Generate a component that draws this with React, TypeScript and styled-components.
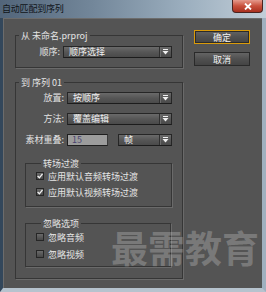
import React, {FC} from "react";
import styled, {createGlobalStyle} from "styled-components";

const GlobalStyle = createGlobalStyle`
  html, body {
    margin: 0;
    padding: 0;
    background: #545454;
  }
  body {
    font-family: "Noto Sans CJK SC", "Noto Sans", sans-serif;
    font-size: 9px;
  }
`

const Window = styled.div`
  width: 266px;
  height: 292px;
  display: flex;
  flex-direction: column;
  overflow: hidden;
`
const TitleBar = styled.div`
  height: 18px;
  flex: none;
  display: flex;
  justify-content: space-between;
  align-items: flex-start;
  background: linear-gradient(90deg, #52657a 0%, #73879a 35%, #9cafbf 70%, #c2ced8 100%);
`
const Title = styled.span`
  padding-left: 2px;
  line-height: 17px;
  color: #101418;
  letter-spacing: -0.2px;
`
const CloseButton = styled.div`
  width: 31px;
  height: 13px;
  margin-right: 3px;
  display: flex;
  align-items: center;
  justify-content: center;
  box-sizing: border-box;
  border: 1px solid #4a2320;
  border-top: none;
  border-radius: 0 0 4px 4px;
  background: linear-gradient(#e59a8c, #c8503c 50%, #a8301f);
`
const Frame = styled.div`
  flex: 1;
  display: flex;
  border-left: 3px solid #33475b;
  border-right: 4px solid #9fb0bf;
  border-bottom: 4px solid #b6c3ce;
`
const Body = styled.div`
  position: relative;
  flex: 1;
  display: flex;
  align-items: flex-start;
  gap: 11px;
  padding: 12px 0 0 12px;
  background: #545454;
  box-shadow: inset 1px 1px 0 #6c6c6c;
`
const Main = styled.div`
  width: 168px;
  display: flex;
  flex-direction: column;
  gap: 9px;
`
const Side = styled.div`
  width: 56px;
  display: flex;
  flex-direction: column;
  gap: 8px;
`
const Group = styled.fieldset<{$pad: string; $margin?: string; $rowGap?: number}>`
  margin: ${p => p.$margin ?? "0"};
  min-width: 0;
  padding: ${p => p.$pad};
  border: 1px solid #363636;
  box-shadow: 1px 1px 0 #6a6a6a;
  display: flex;
  flex-direction: column;
  row-gap: ${p => p.$rowGap ?? 0}px;
`
const Legend = styled.legend<{$indent: number}>`
  margin-left: ${p => p.$indent}px;
  padding: 0 2px;
  line-height: 11px;
  color: #e4e4e4;
`
const Row = styled.div<{$label: number; $gap?: number}>`
  display: grid;
  grid-template-columns: ${p => p.$label}px 1fr;
  column-gap: 3px;
  align-items: center;
  margin-top: ${p => p.$gap ?? 0}px;
`
const Label = styled.span`
  text-align: right;
  color: #e2e2e2;
  line-height: 12px;
  white-space: nowrap;
`
const Select = styled.div<{$width?: number}>`
  height: 12px;
  ${p => p.$width ? `width: ${p.$width}px;` : "flex: 1;"}
  box-sizing: border-box;
  display: flex;
  align-items: center;
  border: 1px solid #262626;
  border-bottom-color: #1c1c1c;
  background: linear-gradient(#6a6a6a, #565656 50%, #4a4a4a);
  color: #f2f2f2;
`
const SelectText = styled.span`
  flex: 1;
  padding-left: 5px;
  line-height: 10px;
  white-space: nowrap;
`
const Arrow = styled.span`
  width: 11px;
  height: 100%;
  display: flex;
  align-items: center;
  justify-content: center;
  border-left: 1px solid #2f2f2f;
  box-shadow: inset 1px 0 0 #6c6c6c;
`
const Pair = styled.div`
  display: flex;
  gap: 10px;
  align-items: center;
`
const NumberField = styled.div`
  width: 41px;
  height: 12px;
  box-sizing: border-box;
  border: 1px solid #1e1e1e;
  border-right-color: #3a3a3a;
  background: #9c9c9c;
  color: #4a4470;
  padding-left: 4px;
  line-height: 10px;
`
const CheckRow = styled.label`
  display: flex;
  align-items: center;
  gap: 4px;
  height: 12px;
  color: #e6e6e6;
  white-space: nowrap;
`
const Box = styled.span`
  width: 8px;
  height: 8px;
  box-sizing: border-box;
  display: flex;
  align-items: center;
  justify-content: center;
  border: 1px solid #262626;
  background: linear-gradient(#6a6a6a, #474747);
`
const ActionButton = styled.div<{$primary?: boolean}>`
  height: 14px;
  box-sizing: border-box;
  display: flex;
  align-items: center;
  justify-content: center;
  color: #f4f4f4;
  border: 1px solid ${p => p.$primary ? "#d99a0a" : "#2a2a2a"};
  box-shadow: ${p => p.$primary ? "inset 0 0 0 1px #2a2a2a" : "none"};
  background: linear-gradient(#646464, #505050 50%, #444444);
`
const Watermark = styled.span`
  position: absolute;
  left: 108px;
  top: 211px;
  font-family: "Noto Sans CJK SC", sans-serif;
  font-weight: 700;
  font-size: 37px;
  line-height: 37px;
  color: rgba(255, 255, 255, 0.22);
  pointer-events: none;
`

const DropArrow: FC = () => (
  <svg width="7" height="6" viewBox="0 0 7 6">
    <rect x="1" y="0" width="5" height="1" fill="#f0f0f0" />
    <path d="M0.5 2 H6.5 L3.5 5.5 Z" fill="#f0f0f0" />
  </svg>
)

const Dropdown: FC<{text: string; width?: number}> = ({text, width}) => (
  <Select $width={width}>
    <SelectText>{text}</SelectText>
    <Arrow><DropArrow /></Arrow>
  </Select>
)

const Check: FC<{checked?: boolean; text: string}> = ({checked, text}) => (
  <CheckRow>
    <Box>
      {checked && (
        <svg width="6" height="6" viewBox="0 0 6 6">
          <path d="M0.6 3 L2.4 4.8 L5.5 0.8" stroke="#f2f2f2" strokeWidth="1.3" fill="none" />
        </svg>
      )}
    </Box>
    {text}
  </CheckRow>
)

const App: FC = () => {
  return (
    <Window>
      <GlobalStyle />
      <TitleBar>
        <Title>自动匹配到序列</Title>
        <CloseButton>
          <svg width="8" height="7" viewBox="0 0 8 7">
            <path d="M1 0.5 L7 6.5 M7 0.5 L1 6.5" stroke="#ffffff" strokeWidth="1.8" />
          </svg>
        </CloseButton>
      </TitleBar>
      <Frame>
        <Body>
          <Main>
            <Group $pad="5px 10px 9px 0">
              <Legend $indent={3}>从 未命名.prproj</Legend>
              <Row $label={44}>
                <Label>顺序:</Label>
                <Dropdown text="顺序选择" />
              </Row>
            </Group>
            <Group $pad="4px 10px 11px 0">
              <Legend $indent={3}>到 序列 01</Legend>
              <Row $label={48}>
                <Label>放置:</Label>
                <Dropdown text="按顺序" />
              </Row>
              <Row $label={48} $gap={9}>
                <Label>方法:</Label>
                <Dropdown text="覆盖编辑" />
              </Row>
              <Row $label={48} $gap={9}>
                <Label>素材重叠:</Label>
                <Pair>
                  <NumberField>15</NumberField>
                  <Dropdown text="帧" />
                </Pair>
              </Row>
              <Group $pad="1px 0 8px 10px" $margin="12px 0 0 9px" $rowGap={4}>
                <Legend $indent={5}>转场过渡</Legend>
                <Check checked text="应用默认音频转场过渡" />
                <Check checked text="应用默认视频转场过渡" />
              </Group>
              <Group $pad="2px 0 6px 10px" $margin="11px 1px 0 9px" $rowGap={5}>
                <Legend $indent={5}>忽略选项</Legend>
                <Check text="忽略音频" />
                <Check text="忽略视频" />
              </Group>
            </Group>
          </Main>
          <Side>
            <ActionButton $primary>确定</ActionButton>
            <ActionButton>取消</ActionButton>
          </Side>
          <Watermark>最需教育</Watermark>
        </Body>
      </Frame>
    </Window>
  )
}

export default App
